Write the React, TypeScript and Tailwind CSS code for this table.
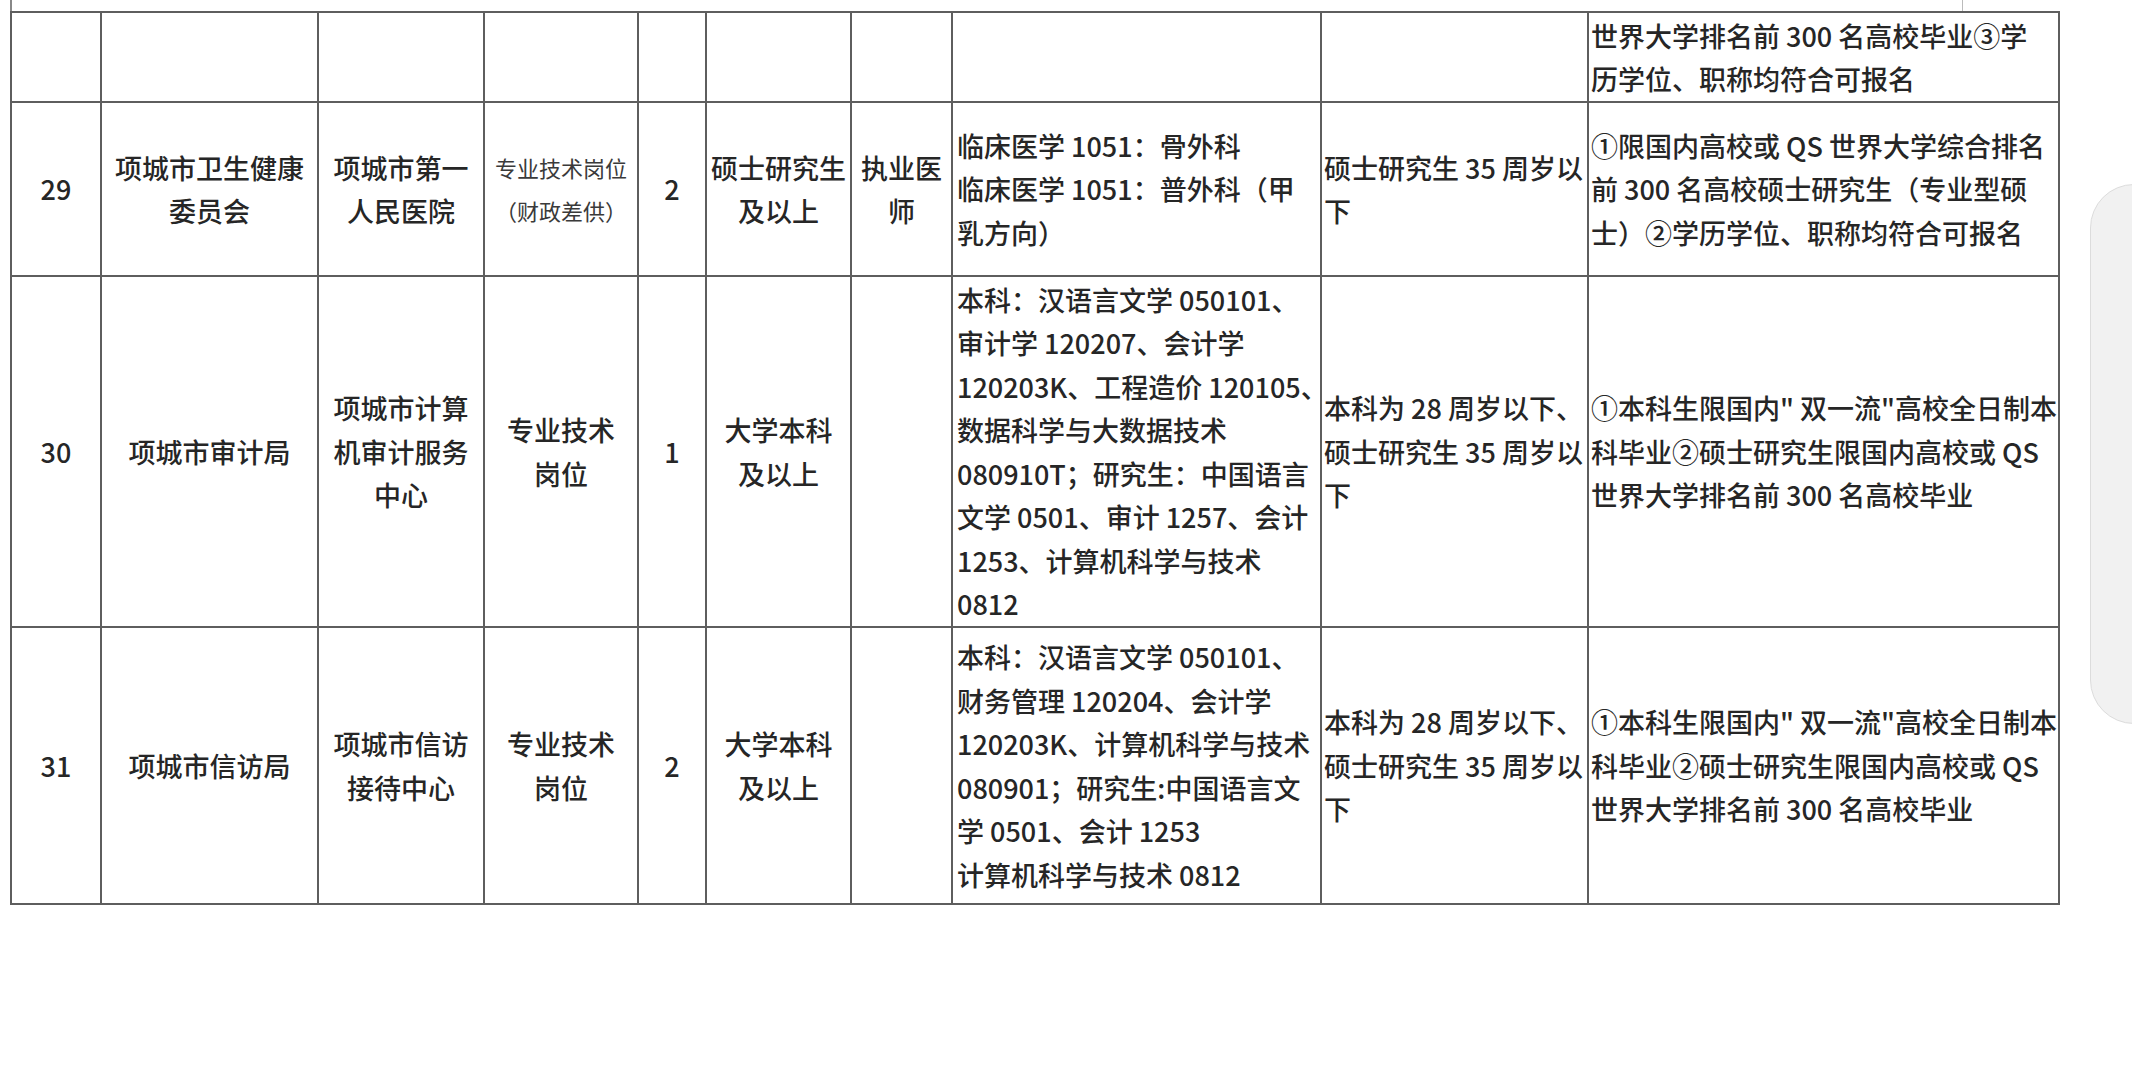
const COLS = [90, 217, 166, 154, 68, 145, 101, 369, 267, 471];

// which columns hold left-aligned text
const LEFT = [false, false, false, false, false, false, false, true, true, true];

type Cell = { lines: string[]; small?: boolean };

type Row = { height: number; cells: Cell[] };

const c = (...lines: string[]): Cell => ({ lines });

const ageLines = ['本科为 28 周岁以下、', '硕士研究生 35 周岁以', '下'];
const reqLines = ['①本科生限国内" 双一流"高校全日制本', '科毕业②硕士研究生限国内高校或 QS', '世界大学排名前 300 名高校毕业'];

const rows: Row[] = [
    {
        height: 90,
        cells: [
            c(),
            c(),
            c(),
            c(),
            c(),
            c(),
            c(),
            c(),
            c(),
            c('世界大学排名前 300 名高校毕业③学', '历学位、职称均符合可报名'),
        ],
    },
    {
        height: 174,
        cells: [
            c('29'),
            c('项城市卫生健康', '委员会'),
            c('项城市第一', '人民医院'),
            { lines: ['专业技术岗位', '（财政差供）'], small: true },
            c('2'),
            c('硕士研究生', '及以上'),
            c('执业医', '师'),
            c('临床医学 1051：骨外科', '临床医学 1051：普外科（甲', '乳方向）'),
            c('硕士研究生 35 周岁以', '下'),
            c('①限国内高校或 QS 世界大学综合排名', '前 300 名高校硕士研究生（专业型硕', '士）②学历学位、职称均符合可报名'),
        ],
    },
    {
        height: 351,
        cells: [
            c('30'),
            c('项城市审计局'),
            c('项城市计算', '机审计服务', '中心'),
            c('专业技术', '岗位'),
            c('1'),
            c('大学本科', '及以上'),
            c(),
            c(
                '本科：汉语言文学 050101、',
                '审计学 120207、会计学',
                '120203K、工程造价 120105、',
                '数据科学与大数据技术',
                '080910T；研究生：中国语言',
                '文学 0501、审计 1257、会计',
                '1253、计算机科学与技术',
                '0812',
            ),
            c(...ageLines),
            c(...reqLines),
        ],
    },
    {
        height: 277,
        cells: [
            c('31'),
            c('项城市信访局'),
            c('项城市信访', '接待中心'),
            c('专业技术', '岗位'),
            c('2'),
            c('大学本科', '及以上'),
            c(),
            c(
                '本科：汉语言文学 050101、',
                '财务管理 120204、会计学',
                '120203K、计算机科学与技术',
                '080901；研究生:中国语言文',
                '学 0501、会计 1253',
                '计算机科学与技术 0812',
            ),
            c(...ageLines),
            c(...reqLines),
        ],
    },
];

function TableCell({ cell, col, height }: { cell: Cell; col: number; height: number }) {
    const left = LEFT[col];
    return (
        <div
            className={`flex flex-col justify-center border-r-2 border-b-2 border-[#5e5e5e] overflow-visible ${
                left ? 'items-start pl-[2px]' : 'items-center text-center'
            } ${col === 7 ? 'pl-[4px]' : ''}`}
            style={{ width: COLS[col], height }}
        >
            {cell.lines.map((line, i) => (
                <div
                    key={i}
                    className={
                        cell.small
                            ? 'whitespace-nowrap text-[22px] leading-[43.5px] text-[#3a3a3a]'
                            : 'whitespace-nowrap text-[27px] leading-[43.5px] font-medium'
                    }
                >
                    {line}
                </div>
            ))}
        </div>
    );
}

export default function App() {
    return (
        <div className="relative w-[2132px] h-[1080px] overflow-hidden bg-white text-[#262626] font-['Noto_Sans_CJK_SC',sans-serif]">
            <div className="flex">
                <div className="ml-[10px] h-[11px] border-l-2 border-[#888]"></div>
                <div className="ml-[1950px] h-[11px] border-l border-[#bbb]"></div>
            </div>
            <div className="ml-[10px] w-max border-l-2 border-t-2 border-[#5e5e5e]">
                {rows.map((row, r) => (
                    <div key={r} className="flex">
                        {row.cells.map((cell, i) => (
                            <TableCell key={i} cell={cell} col={i} height={row.height} />
                        ))}
                    </div>
                ))}
            </div>

            {/* floating side handle over the page */}
            <div className="absolute left-[2090px] top-[184px] w-[90px] h-[540px] rounded-[44px] bg-[#f1f1f1] border border-[#dcdcdc]"></div>
        </div>
    );
}
